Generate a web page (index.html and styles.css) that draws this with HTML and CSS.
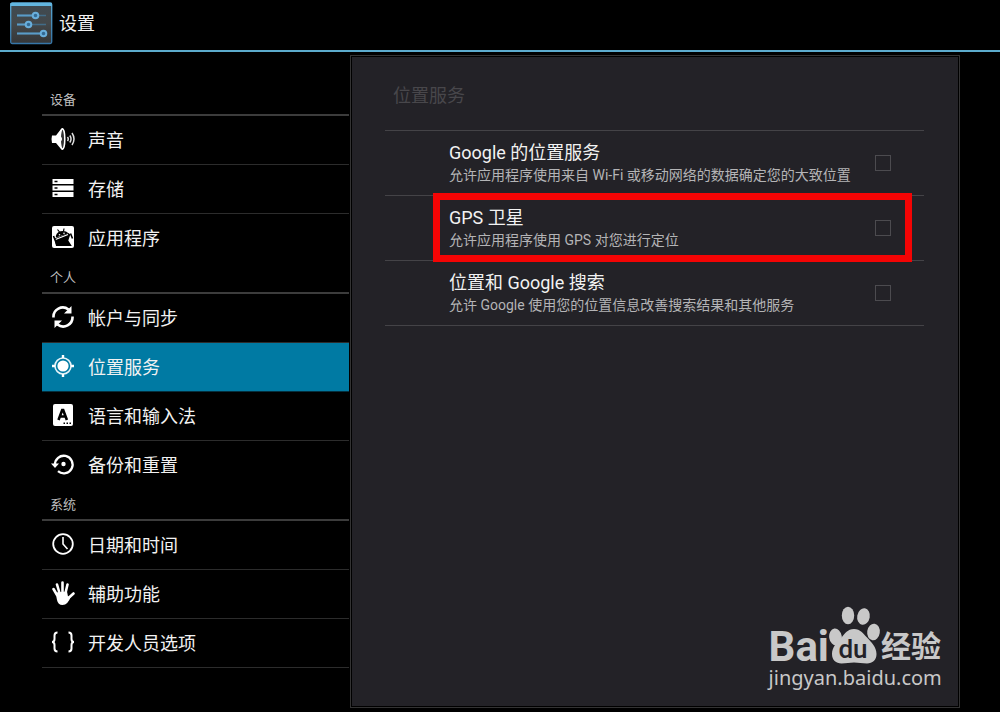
FILE: index.html
```
<!DOCTYPE html>
<html lang="zh-CN">

<head>
    <meta charset="utf-8">
    <title>设置</title>
    <link rel="stylesheet" href="styles.css">
</head>

<body>
    <header class="topbar">
        <svg class="appIcon" viewBox="0 0 44 44">
            <defs>
                <linearGradient id="plate" x1="0" y1="0" x2="0" y2="1">
                    <stop offset="0" stop-color="#3e4a52" />
                    <stop offset="0.5" stop-color="#44484a" />
                    <stop offset="1" stop-color="#343638" />
                </linearGradient>
                <linearGradient id="frame" x1="0" y1="0" x2="0" y2="1">
                    <stop offset="0" stop-color="#5cacd8" />
                    <stop offset="1" stop-color="#3676a8" />
                </linearGradient>
            </defs>
            <rect x="1.7" y="1" width="41" height="40.5" rx="1.5" fill="url(#plate)" stroke="url(#frame)" stroke-width="1.3" />
            <path d="M1.5 1h41.4v3H1.5z" fill="#62b6e0" />
            <path d="M8 13.500h29M8 22.500h29M8 31.500h29" stroke="#426c88" stroke-width="1.6" />
            <path d="M8 13.500h18M8 22.500h11M8 31.500h24" stroke="#5a9cc8" stroke-width="1.8" />
            <g fill="#336a94" stroke="#69aedb" stroke-width="2">
                <circle cx="26.5" cy="13.500" r="2.8" />
                <circle cx="19.5" cy="22.500" r="2.8" />
                <circle cx="34.5" cy="31.500" r="2.8" />
            </g>
        </svg>
        <h1>设置</h1>
    </header>

    <div class="content">
        <nav class="sidebar">
            <h2>设备</h2>
            <ul>
                <li><a href="#sound">
                    <svg viewBox="0 0 24 24">
                        <path d="M1 8.500h4L10 2q1.500-2 2.500 0v20q-1 2-2.500 0L5 16H1Q0 12 1 8.500z" fill="#fff" />
                        <ellipse cx="11.500" cy="12" rx="2.300" ry="10" fill="#333" stroke="#fff" stroke-width="1.500" />
                        <path d="M9.800 9.500q2.500 2.500 0 5z" fill="#fff" />
                        <path d="M16.500 10q1.500 2 0 4M18.800 8.500q2.500 3.500 0 7M21 6q4 6 0 12" fill="none" stroke="#ddd" stroke-width="1.500" />
                    </svg>声音</a></li>
                <li><a href="#storage">
                    <svg viewBox="0 0 24 24">
                        <path d="M1.500 3h21v5h-21zM1.500 9.500h21v5h-21zM1.500 16h21v5h-21z" fill="#fff" />
                        <path d="M3.500 5.500h3M3.500 12h3M3.500 18.500h3" stroke="#000" stroke-width="1.400" />
                    </svg>存储</a></li>
                <li><a href="#apps">
                    <svg viewBox="0 0 24 24">
                        <rect x="1" y="1" width="22" height="22" rx="2" fill="#fff" />
                        <path d="M4.800 12.500q-.3-4.500 4.500-6.200 5-1.300 8.200 2z" fill="#000" />
                        <path d="M6.500 4.500l2 2.500M13 3.500l-.5 3" stroke="#000" stroke-width="1.200" />
                        <path d="M3.500 13.500l14-5.500 1.800 1.500-2 6 3.500 5.500H5z" fill="#000" />
                        <path d="M4.500 14.500l12.500-5" stroke="#fff" stroke-width="1.200" />
                        <path d="M2.500 11l3.500 9M19.500 8.500l2 5" stroke="#000" stroke-width="1.600" />
                        <circle cx="8.500" cy="9.800" r=".8" fill="#fff" />
                        <circle cx="13" cy="8.200" r=".8" fill="#fff" />
                    </svg>应用程序</a></li>
            </ul>
            <h2>个人</h2>
            <ul>
                <li><a href="#accounts">
                    <svg viewBox="0 0 24 24">
                        <path d="M2.500 12.500A9.300 9.300 0 0 1 17.500 4.500M21.500 11.500A9.300 9.300 0 0 1 6.500 19.500" fill="none" stroke="#fff" stroke-width="2.600" />
                        <path d="M20.500 1v7.500H13zM3.500 23v-7.500H11z" fill="#fff" />
                    </svg>帐户与同步</a></li>
                <li class="selected"><a href="#location">
                    <svg viewBox="0 0 24 24">
                        <circle cx="12" cy="12" r="8" fill="none" stroke="#e6f3f8" stroke-width="1.600" />
                        <circle cx="12" cy="12" r="5.600" fill="#fff" />
                        <path d="M12 1v3M12 20v3M1 12h3M20 12h3" stroke="#fff" stroke-width="2.400" />
                    </svg>位置服务</a></li>
                <li><a href="#language">
                    <svg viewBox="0 0 24 24">
                        <rect x="2" y="1" width="20" height="22" rx="2" fill="#fff" />
                        <path d="M7.500 17l3.700-10h1l3.700 10M9 13.500h5.500" fill="none" stroke="#000" stroke-width="2.600" />
                        <path d="M12.500 20.300h1.500M15.500 20.300h1.500M18.500 20.300h1.500" stroke="#000" stroke-width="1.500" />
                    </svg>语言和输入法</a></li>
                <li><a href="#backup">
                    <svg viewBox="0 0 24 24">
                        <path d="M4 13A8.800 8.800 0 1 1 7 19.200" fill="none" stroke="#fff" stroke-width="2.300" />
                        <path d="M0 11.500h8L4 16z" fill="#fff" />
                        <circle cx="12.500" cy="12" r="2.200" fill="#fff" />
                    </svg>备份和重置</a></li>
            </ul>
            <h2>系统</h2>
            <ul>
                <li><a href="#date">
                    <svg viewBox="0 0 24 24">
                        <circle cx="12" cy="12" r="9.800" fill="none" stroke="#fff" stroke-width="1.800" />
                        <path d="M12 5v7l4.500 5" fill="none" stroke="#fff" stroke-width="1.600" />
                    </svg>日期和时间</a></li>
                <li><a href="#accessibility">
                    <svg viewBox="0 0 24 24">
                        <path d="M6 14L2.500 8M8.500 12L6 3.500M11.500 12V1.500M14.500 12l2-8.500M17.500 17l5-4.500" stroke="#fff" stroke-width="2.600" stroke-linecap="round" />
                        <path d="M4.500 11.500l11.500-1 1 5 3-.500q-3 9-8.500 9-4.500 0-5.500-5z" fill="#fff" />
                    </svg>辅助功能</a></li>
                <li><a href="#developer">
                    <svg viewBox="0 0 24 24">
                        <path d="M6.500 2.500q-3 0-3 3V9q0 3-2.500 3 2.500 0 2.500 3v3.500q0 3 3 3M17.500 2.500q3 0 3 3V9q0 3 2.500 3-2.500 0-2.500 3v3.500q0 3-3 3" fill="none" stroke="#fff" stroke-width="2" />
                    </svg>开发人员选项</a></li>
            </ul>
        </nav>

        <main class="panel">
            <h2>位置服务</h2>
            <ul class="options">
                <li>
                    <label for="network">
                        <span class="title">Google 的位置服务</span>
                        <span class="desc">允许应用程序使用来自 Wi-Fi 或移动网络的数据确定您的大致位置</span>
                    </label>
                    <input type="checkbox" id="network">
                </li>
                <li class="marked">
                    <label for="gps">
                        <span class="title">GPS 卫星</span>
                        <span class="desc">允许应用程序使用 GPS 对您进行定位</span>
                    </label>
                    <input type="checkbox" id="gps">
                </li>
                <li>
                    <label for="search">
                        <span class="title">位置和 Google 搜索</span>
                        <span class="desc">允许 Google 使用您的位置信息改善搜索结果和其他服务</span>
                    </label>
                    <input type="checkbox" id="search">
                </li>
            </ul>
            <div class="watermark">
                <div class="brand">
                    <span class="latin">Bai</span>
                    <svg viewBox="0 0 52 58">
                        <g fill="#c8c8c8">
                            <ellipse cx="6.500" cy="31" rx="6.300" ry="8.500" transform="rotate(-8 6.500 31)" />
                            <ellipse cx="19" cy="9.500" rx="6.200" ry="8.800" />
                            <ellipse cx="34.500" cy="10.500" rx="6.300" ry="8.300" transform="rotate(10 34.500 10.500)" />
                            <ellipse cx="44.500" cy="26" rx="6.300" ry="8.300" transform="rotate(8 44.500 26)" />
                            <path d="M25 23c-6.500 0-9 4.500-12.500 8.500C8 36.500 3 41 3 48c0 6 4 9.500 9.500 9.500 5 0 8-1 12.500-1s8 1 13 1c5.500 0 9.500-3.500 9.500-9.500 0-7-5-11.500-9.500-16.500C34 27.500 31.500 23 25 23z" />
                        </g>
                        <text x="24" y="52" text-anchor="middle">du</text>
                    </svg>
                    <span class="han">经验</span>
                </div>
                <div class="site">jingyan.baidu.com</div>
            </div>
        </main>
    </div>
</body>

</html>
```
FILE: styles.css
```
* {
    box-sizing: border-box;
    padding: 0;
    margin: 0;
}

body {
    display: flex;
    flex-direction: column;
    min-height: 100vh;
    background: #000;
    color: #f2f2f2;
    font-family: Roboto, "Noto Sans CJK SC", sans-serif;
    font-size: 18px;
}

h1,
h2 {
    font-weight: normal;
}

ul {
    list-style: none;
}

.topbar {
    display: flex;
    align-items: center;
    gap: 6px;
    height: 52px;
    padding: 0 0 2px 9px;
    border-bottom: 2px solid #5cabcd;
}

.topbar h1 {
    font-size: 18px;
    line-height: 24px;
}

.appIcon {
    width: 44px;
    height: 44px;
}

.content {
    display: flex;
    flex: 1;
}

/* left column */
.sidebar {
    width: 35%;
    padding: 33px 1px 0 42px;
}

.sidebar h2 {
    height: 31px;
    padding-left: 8px;
    border-bottom: 2px solid #3c3c3c;
    color: #bebebe;
    font-size: 13px;
    line-height: 30px;
}

.sidebar a {
    display: flex;
    align-items: center;
    gap: 13px;
    height: 48px;
    padding: 0 0 2px 9px;
    color: inherit;
    text-decoration: none;
}

.sidebar li {
    border-bottom: 1px solid #2c2c2c;
}

.sidebar li:last-child {
    border-bottom-color: transparent;
}

.sidebar ul:last-child li:last-child {
    border-bottom-color: #2c2c2c;
}

.sidebar svg {
    width: 24px;
    height: 24px;
}

.sidebar .selected {
    background: #007aa3;
    border-bottom-color: #04303f;
}

/* right column */
.panel {
    position: relative;
    flex: 1;
    margin: 3px 40px 4px 0;
    padding: 24px 35px 24px 34px;
    border: 1px solid #333;
    outline: 1px solid #000;
    background: #232227;
    box-shadow: inset 0 0 0 1px #000;
}

.panel h2 {
    padding-left: 8px;
    color: #48474b;
    font-size: 18px;
    line-height: 32px;
}

.options {
    margin-top: 18px;
    border-top: 1px solid #444347;
}

.options li {
    position: relative;
    display: flex;
    align-items: center;
    justify-content: space-between;
    height: 65px;
    padding: 0 33px 0 64px;
    border-bottom: 1px solid #444347;
}

.options label {
    padding-top: 2px;
}

.options .title,
.options .desc {
    display: block;
    line-height: 22px;
}

.options .desc {
    color: #b4b4b6;
    font-size: 14px;
}

.options input {
    appearance: none;
    width: 16px;
    height: 16px;
    border: 1px solid #4c4b4f;
}

.marked::after {
    content: "";
    position: absolute;
    top: -3px;
    right: 12px;
    bottom: -2px;
    left: 48px;
    border: 7px solid #f40404;
    pointer-events: none;
}

.watermark {
    position: absolute;
    right: 16px;
    bottom: 15px;
    color: #c8c8c8;
}

.brand {
    display: flex;
    align-items: flex-end;
    justify-content: space-between;
    height: 58px;
    padding-right: 2px;
}

.brand span {
    font-weight: bold;
    line-height: 34px;
}

.brand svg {
    width: 52px;
    height: 58px;
}

.brand text {
    fill: #232227;
    font-size: 26px;
    font-weight: 500;
}

.latin {
    font-size: 42px;
}

.han {
    font-size: 30px;
}

.site {
    font-family: "Noto Sans", sans-serif;
    font-size: 20px;
    line-height: 28px;
}
```
